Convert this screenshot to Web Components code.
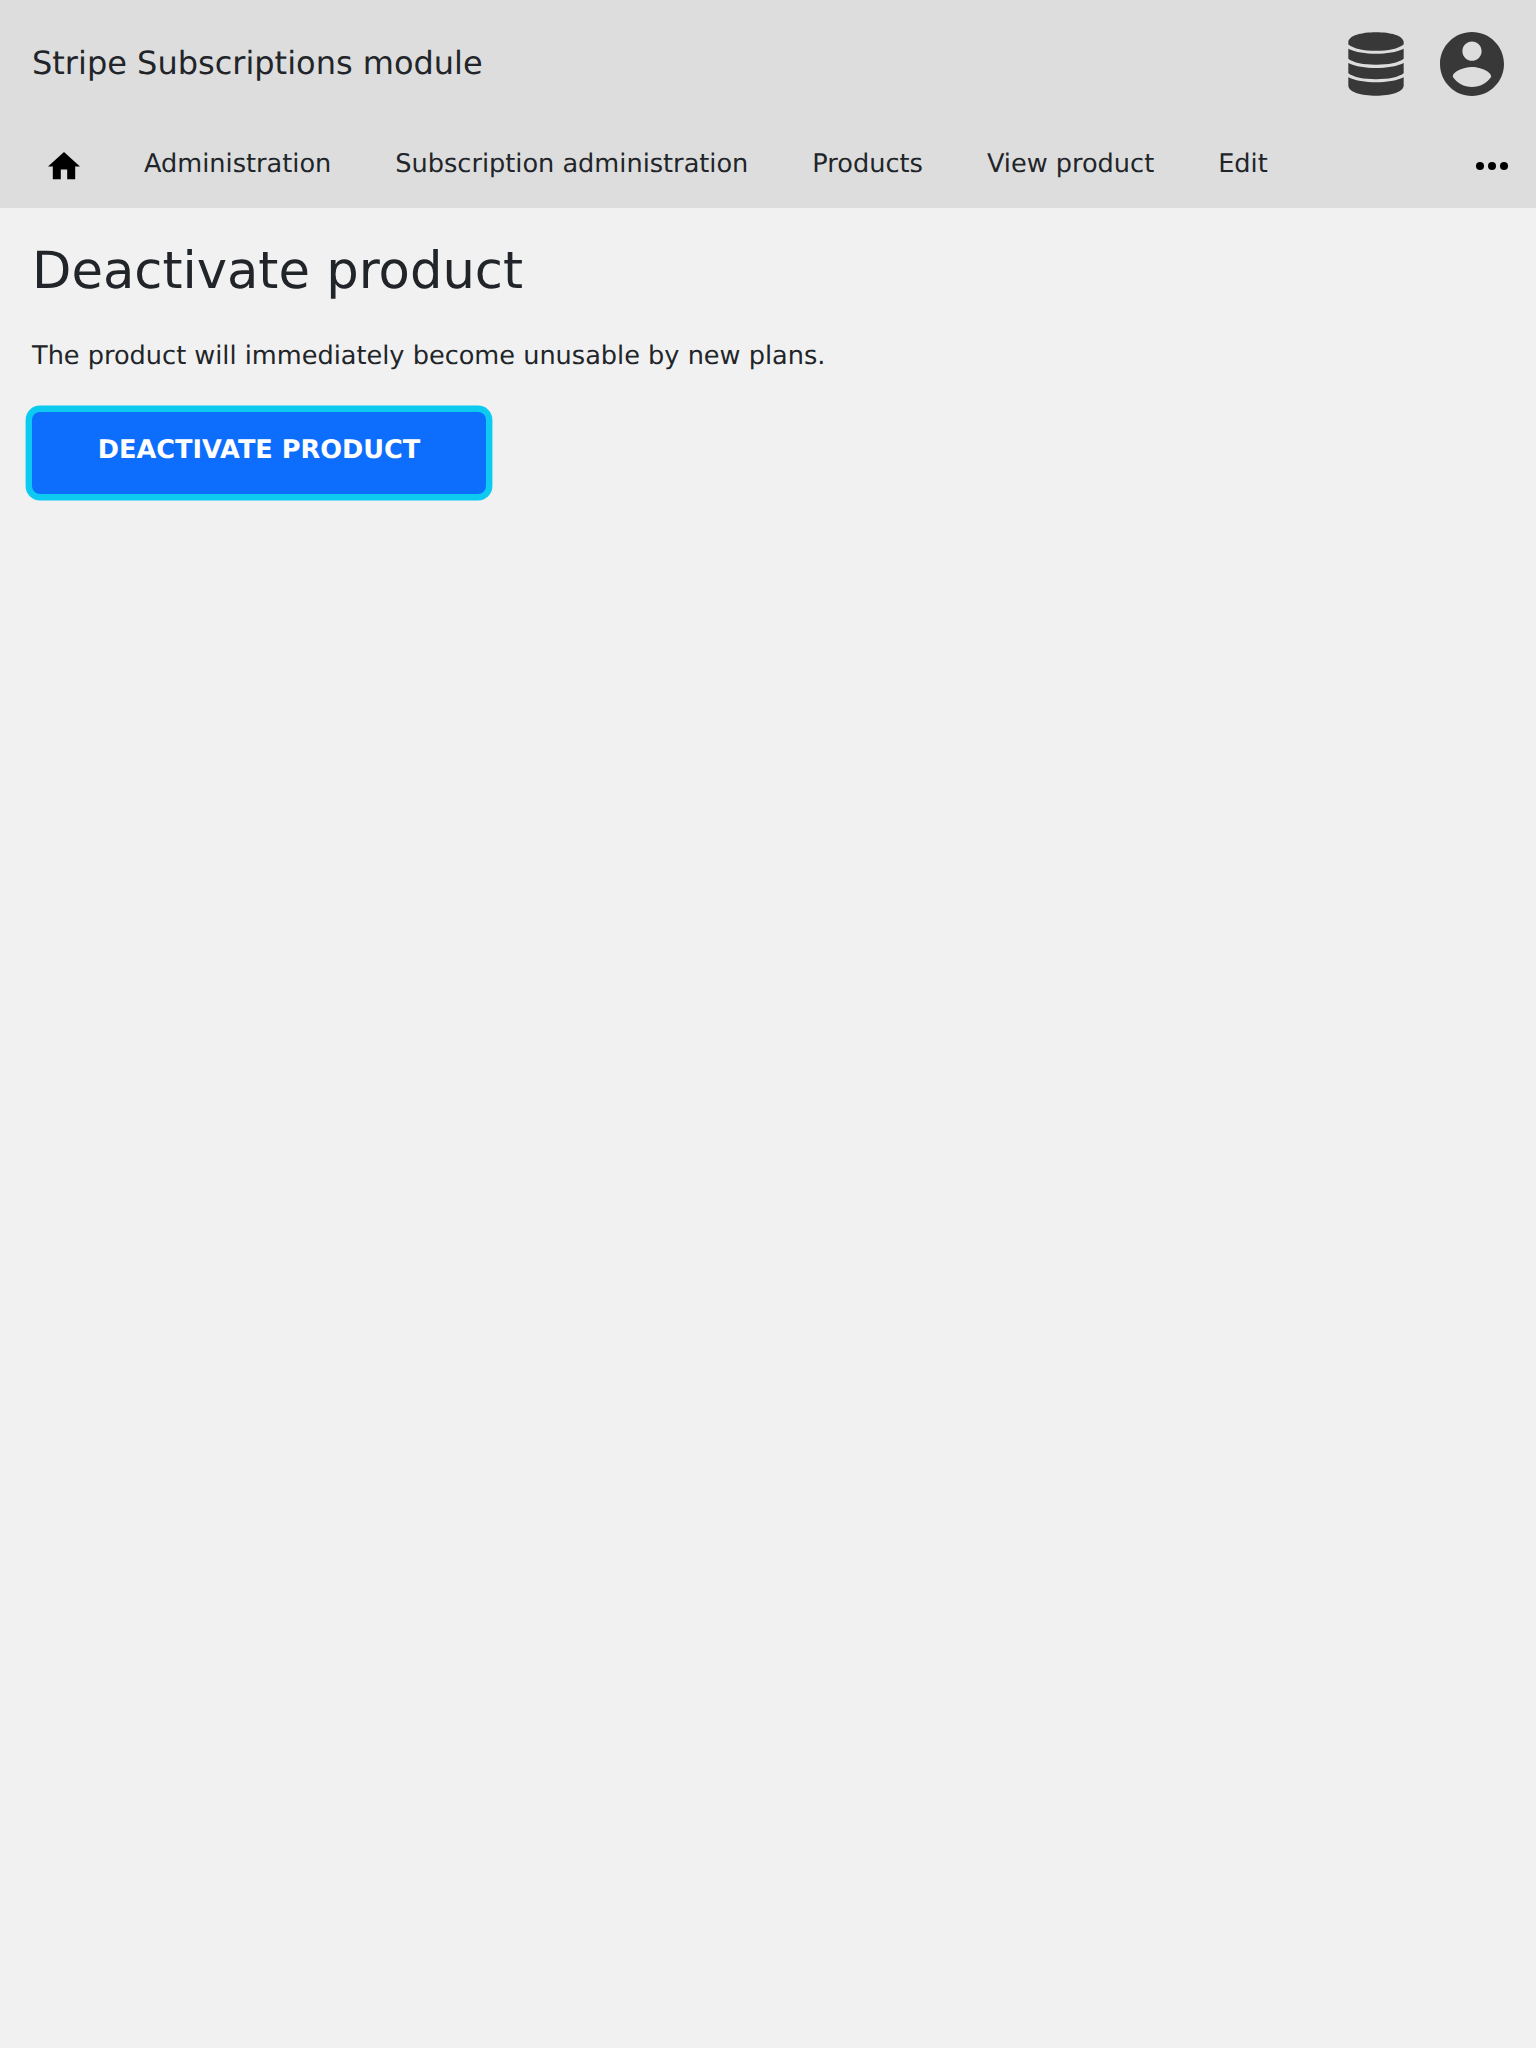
<!DOCTYPE html>
<html lang="en">
<head>
<meta charset="utf-8">
<title>Deactivate product</title>
<style>
html,body{margin:0;min-height:100%;background:#f1f1f1}
body{min-height:2048px;color:#212529;font-family:"DejaVu Sans",sans-serif;font-size:25.6px;line-height:38.4px;text-rendering:geometricPrecision}
</style>
</head>
<body>
<app-header heading="Stripe Subscriptions module">
  <nav-link>Administration</nav-link>
  <nav-link>Subscription administration</nav-link>
  <nav-link>Products</nav-link>
  <nav-link>View product</nav-link>
  <nav-link>Edit</nav-link>
</app-header>
<page-content heading="Deactivate product">
  <span>The product will immediately become unusable by new plans.</span>
  <submit-button slot="action">DEACTIVATE PRODUCT</submit-button>
</page-content>
<script>
class BaseElement extends HTMLElement {
  connectedCallback() {
    if (this.shadowRoot) return;
    this.attachShadow({mode: 'open'}).innerHTML = this.render();
  }
}
customElements.define('app-icon', class extends BaseElement {
  render() {
    const icons = {
      database: ['-0.5 0 169 192', '<path d="M.5 29C2 10 40 0 84 0s82 10 83.500 29v8C150 50 122 56 84 56S18 50 .5 37ZM.5 50c22 11 52 15 83.500 15s61.500-4 83.500-15v30c-16 12-45.500 18-83.500 18S16 92 .5 80ZM.5 93c22 11 52 15 83.500 15s61.500-4 83.500-15v31c-16 12-45.500 18-83.500 18s-67.500-6-83.500-18ZM.5 136c22 11 52 15 83.500 15s61.500-4 83.500-15v26c-2 20-39.500 30-83.500 30S2 182 .5 162Z"/>'],
      account: ['2 2 20 20', '<path d="M12 2C6.48 2 2 6.48 2 12s4.48 10 10 10 10-4.480 10-10S17.520 2 12 2zm0 3c1.660 0 3 1.340 3 3s-1.340 3-3 3-3-1.340-3-3 1.340-3 3-3zm0 14.200c-2.500 0-4.710-1.280-6-3.220.03-1.990 4-3.080 6-3.080 1.990 0 5.970 1.090 6 3.080-1.290 1.940-3.500 3.220-6 3.220z"/>'],
      home: ['2 3 20 17', '<path d="M10 20v-6h4v6h5v-8h3L12 3 2 12h3v8z"/>'],
      more: ['0 0 32 8', '<circle cx="4" cy="4" r="4"/><circle cx="16" cy="4" r="4"/><circle cx="28" cy="4" r="4"/>']
    };
    const [box, shape] = icons[this.getAttribute('name')];
    return `<style>:host{display:block;flex:none}svg{display:block;width:100%;height:100%;fill:currentColor}</style><svg viewBox="${box}">${shape}</svg>`;
  }
});
customElements.define('nav-link', class extends BaseElement {
  render() { return '<style>:host{display:block;white-space:nowrap}</style><slot></slot>'; }
});
customElements.define('app-header', class extends BaseElement {
  render() {
    return `<style>
:host{display:block;height:208px;background:#ddd;box-sizing:border-box}
.top{display:flex;align-items:center;justify-content:space-between;height:128px;padding:0 32px;font-size:32px;line-height:48px}
.top span{margin-top:-2px}
.tools{display:flex;gap:36px;color:#383838}
.db{width:56px;height:64px}.user{width:64px;height:64px}
nav{display:flex;align-items:center;height:80px;padding:0 28px 0 48px;box-sizing:border-box}
.links{display:flex;gap:64px;margin:-7.600px 0 0 64px;flex:1}
.home{width:32px;height:27.200px;color:#000;margin-top:-4px}
.more{width:32px;height:8px;color:#000;margin-top:-4px}
</style>
<div class="top"><span>${this.getAttribute('heading')}</span><div class="tools"><app-icon class="db" name="database"></app-icon><app-icon class="user" name="account"></app-icon></div></div>
<nav><app-icon class="home" name="home"></app-icon><div class="links"><slot></slot></div><app-icon class="more" name="more"></app-icon></nav>`;
  }
});
customElements.define('page-content', class extends BaseElement {
  render() {
    return `<style>
:host{display:block;padding:33px 32px 32px}
h1{margin:0;font-size:51.200px;line-height:61.440px;font-weight:400}
p{margin:35px 0 36.160px}
</style><h1>${this.getAttribute('heading')}</h1><p><slot></slot></p><slot name="action"></slot>`;
  }
});
customElements.define('submit-button', class extends BaseElement {
  render() {
    return `<style>
:host{display:block}
button{display:block;box-sizing:border-box;width:454px;height:82px;border:0;border-radius:8px;padding:0 0 6px;margin:0;background:#0d6efd;color:#fff;font:bold 25.600px/38.400px "DejaVu Sans",sans-serif;text-rendering:inherit;box-shadow:0 0 0 6.400px #0dcaf0}
</style><button type="button"><slot></slot></button>`;
  }
});
</script>
</body>
</html>
